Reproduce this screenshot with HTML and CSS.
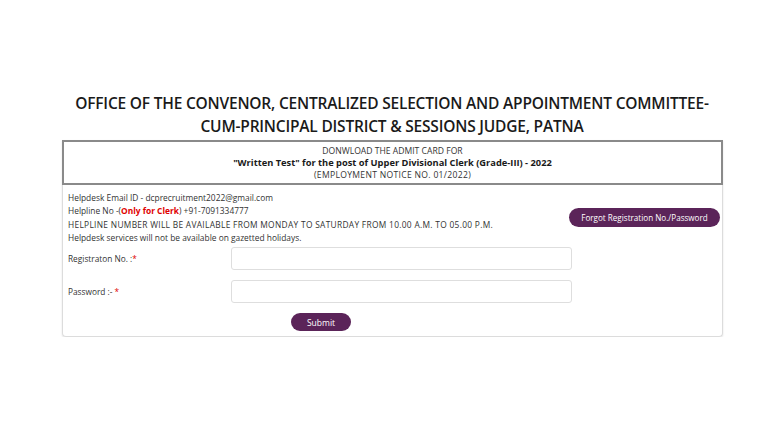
FILE: index.html
```
<!DOCTYPE html>
<html>
<head>
<meta charset="utf-8">
<link rel="stylesheet" href="styles.css">
</head>
<body>
<div class="page">
  <h1 class="title">OFFICE OF THE CONVENOR, CENTRALIZED SELECTION AND APPOINTMENT COMMITTEE-<br>CUM-PRINCIPAL DISTRICT &amp; SESSIONS JUDGE, PATNA</h1>
  <div class="card">
    <div class="notice">
      <div>DONWLOAD THE ADMIT CARD FOR</div>
      <div class="bold">"Written Test" for the post of Upper Divisional Clerk (Grade-III) - 2022</div>
      <div class="caps">(EMPLOYMENT NOTICE NO. 01/2022)</div>
    </div>
    <div class="info-row">
      <div class="info">
        <div>Helpdesk Email ID - dcprecruitment2022@gmail.com</div>
        <div>Helpline No -(<span class="red">Only for Clerk</span>) +91-7091334777</div>
        <div class="caps">HELPLINE NUMBER WILL BE AVAILABLE FROM MONDAY TO SATURDAY FROM 10.00 A.M. TO 05.00 P.M.</div>
        <div>Helpdesk services will not be available on gazetted holidays.</div>
      </div>
      <button class="btn forgot">Forgot Registration No./Password</button>
    </div>
    <div class="form">
      <label class="lbl">Registraton No. :<span class="star">*</span></label>
      <input class="field" type="text">
      <label class="lbl">Password :- <span class="star">*</span></label>
      <input class="field" type="password">
      <div></div>
      <div class="submit-wrap"><button class="btn submit">Submit</button></div>
    </div>
  </div>
</div>
</body>
</html>
```
FILE: styles.css
```
* { box-sizing: border-box; }
body { margin: 0; background: #fff; font-family: "Open Sans", "Noto Sans", sans-serif; color: #222; }
.page { padding-top: 92px; }
.title {
  margin: 0 0 2px 0;
  text-align: center;
  font-family: "Open Sans", sans-serif;
  font-weight: 600;
  font-size: 15.5px;
  line-height: 23px;
  color: #1a1a1a;
  letter-spacing: -0.2px;
}
.card {
  width: 661px;
  margin-left: 62px;
  border: 1px solid #dcdcdc;
  border-top: none;
  border-radius: 0 0 4px 4px;
  box-shadow: 0 1px 2px rgba(0,0,0,0.12);
  padding-bottom: 5px;
}
.notice {
  border: 2px solid #8a8a8a;
  height: 45px;
  text-align: center;
  font-size: 8.6px;
  line-height: 12px;
  padding-top: 3px;
  color: #333;
  margin: 0 -1px;
}
.notice .caps { letter-spacing: 0.3px; }
.bold { font-weight: 700; color: #1a1a1a; font-size: 9.3px; }
.info-row {
  display: flex;
  align-items: center;
  justify-content: space-between;
  padding: 6px 2px 0 5px;
}
.info { font-size: 8.4px; line-height: 13.3px; color: #333; }
.info .caps { letter-spacing: 0.3px; }
.red { color: #e00000; font-weight: 700; }
.btn {
  border: none;
  background: #5b2459;
  color: #fff;
  font-family: "Open Sans", sans-serif;
  border-radius: 10px;
  cursor: pointer;
}
.forgot { font-size: 8.1px; height: 19px; width: 151px; padding: 0; margin-top: 0; }
.form {
  display: grid;
  grid-template-columns: 163px 341px;
  row-gap: 10px;
  align-items: center;
  padding: 3px 0 0 5px;
}
.lbl { font-size: 8.3px; color: #333; }
.star { color: #e00000; }
.field {
  height: 23px;
  border: 1px solid #dedede;
  border-radius: 3px;
  background: #fff;
  display: block;
}
.submit-wrap { padding-left: 60px; display: flex; }
.submit { width: 60px; height: 18px; font-size: 8.5px; padding: 0; border-radius: 9px; display: block; }
```
